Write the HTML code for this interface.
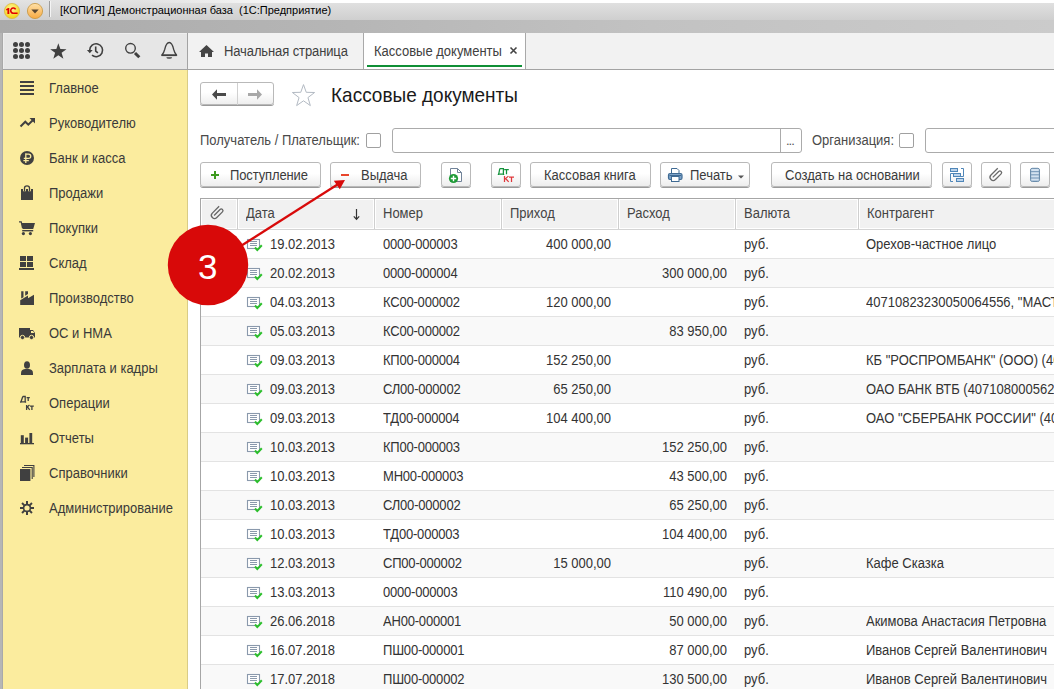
<!DOCTYPE html>
<html><head><meta charset="utf-8">
<style>
*{margin:0;padding:0;box-sizing:border-box}
html,body{width:1054px;height:689px;overflow:hidden;background:#fff;font-family:"Liberation Sans",sans-serif;font-size:13px;color:#333}
.a{position:absolute;white-space:nowrap}
#title{left:0;top:0;width:1054px;height:20px;background:linear-gradient(#e3e3e3,#cfcfcf)}
#ttop{left:0;top:0;width:1054px;height:3px;background:linear-gradient(90deg,rgba(255,255,255,0) 140px,#fff 330px)}
#band{left:0;top:20px;width:1054px;height:13px;background:linear-gradient(90deg,#aaaaaa,#b6b6b6 350px,#c2c2c2 650px,#cbcbcb)}
#lborder{left:0;top:33px;width:3px;height:656px;background:linear-gradient(90deg,#b6b6b6 2px,#a9a9a9 2px)}
#ltop{left:3px;top:33px;width:184px;height:36px;background:#e6e6e6;border-top:1px solid #eeeeee;border-left:1px solid #eeeeee}
#tabs{left:188px;top:33px;width:866px;height:36px;background:#f2f2f2}
#hline{left:3px;top:69px;width:1051px;height:1px;background:#a3a3a3}
#vline{left:187px;top:33px;width:1px;height:37px;background:#a3a3a3}
#yellow{left:3px;top:70px;width:184px;height:619px;background:#fbec9e}
#yline{left:187px;top:70px;width:1px;height:619px;background:#d9cc86}
.side{left:49px;color:#3a3a3a;font-size:13px;line-height:16px}
.t,.side,.c,.btn span,.hd span{transform:scaleY(1.1);transform-origin:0 12px}
.btn{position:absolute;top:162px;height:25px;border:1px solid #b9b9b9;border-radius:3px;background:linear-gradient(#ffffff 45%,#ededed);box-shadow:0 1px 0 #9a9a9a;color:#3b3b3b;line-height:16px}
.btn span{position:absolute;top:5px}
.hd{position:absolute;top:199px;height:30px;background:#f1f1f1;border:1px solid #fff;color:#444;line-height:16px}
.hd span{position:absolute;left:7px;top:6px}
.hsep{position:absolute;top:199px;width:1px;height:30px;background:#cfcfcf}
.row{position:absolute;left:201px;width:853px;height:29px;border-bottom:1px solid #e3e3e3}
.c{position:absolute;white-space:nowrap;top:7px;line-height:16px;color:#333}
.r{text-align:right}
.cb{position:absolute;top:133px;width:15px;height:15px;border:1px solid #a0a0a0;border-radius:2px;background:#fff}
.inp{position:absolute;top:128px;height:25px;border:1px solid #ababab;border-radius:3px;background:#fff}
</style></head><body>
<div id="title" class="a"></div><div id="ttop" class="a"></div>
<div class="a" style="left:60px;top:3px;font-size:11px;line-height:14px;color:#000">[КОПИЯ] Демонстрационная база&nbsp; (1С:Предприятие)</div>
<div id="band" class="a"></div>
<div id="lborder" class="a"></div>
<div id="ltop" class="a"></div>
<div id="tabs" class="a"></div>
<div class="a" style="left:363px;top:33px;width:163px;height:36px;background:#fff;border-left:1px solid #a9a9a9;border-right:1px solid #a9a9a9"></div>
<div class="a" style="left:367px;top:65px;width:155px;height:2px;background:#0f8f36"></div>
<div class="a t" style="left:224px;top:44px;line-height:16px;color:#404040;letter-spacing:-0.11px">Начальная страница</div>
<div class="a t" style="left:374px;top:44px;line-height:16px;color:#404040">Кассовые документы</div>
<div id="hline" class="a"></div>
<div id="vline" class="a"></div>
<div id="yellow" class="a"></div>
<div id="yline" class="a"></div>
<div class="a side" style="top:81px">Главное</div><div class="a side" style="top:116px">Руководителю</div><div class="a side" style="top:151px">Банк и касса</div><div class="a side" style="top:186px">Продажи</div><div class="a side" style="top:221px">Покупки</div><div class="a side" style="top:256px">Склад</div><div class="a side" style="top:291px">Производство</div><div class="a side" style="top:326px">ОС и НМА</div><div class="a side" style="top:361px">Зарплата и кадры</div><div class="a side" style="top:396px">Операции</div><div class="a side" style="top:431px">Отчеты</div><div class="a side" style="top:466px">Справочники</div><div class="a side" style="top:501px">Администрирование</div>
<!-- nav -->
<div class="a" style="left:200px;top:82px;width:74px;height:23px;border:1px solid #b9b9b9;border-radius:3px;background:linear-gradient(#fff 45%,#eee);box-shadow:0 1px 0 #9a9a9a"></div>
<div class="a" style="left:237px;top:83px;width:1px;height:22px;background:#d0d0d0"></div>
<div class="a" style="left:331px;top:85px;font-size:19px;line-height:22px;color:#1a1a1a;transform:scaleY(1.077);transform-origin:0 17px">Кассовые документы</div>
<!-- filters -->
<div class="a t" style="left:200px;top:133px;line-height:16px;color:#4a4a4a">Получатель / Плательщик:</div>
<div class="cb" style="left:366px"></div>
<div class="inp" style="left:392px;width:410px"></div>
<div class="a" style="left:780px;top:129px;width:1px;height:23px;background:#ababab"></div>
<div class="a" style="left:786px;top:133px;line-height:16px;color:#555;letter-spacing:-1px">...</div>
<div class="a t" style="left:812px;top:133px;line-height:16px;color:#4a4a4a">Организация:</div>
<div class="cb" style="left:899px"></div>
<div class="inp" style="left:925px;width:140px"></div>
<!-- toolbar -->
<div class="btn" style="left:200px;width:121px"><span style="left:29px;letter-spacing:-0.13px">Поступление</span></div>
<div class="btn" style="left:330px;width:91px"><span style="left:30px">Выдача</span></div>
<div class="btn" style="left:441px;width:30px"></div>
<div class="btn" style="left:491px;width:30px"></div>
<div class="btn" style="left:530px;width:121px"><span style="left:13px">Кассовая книга</span></div>
<div class="btn" style="left:660px;width:90px"><span style="left:29px">Печать</span></div>
<div class="btn" style="left:771px;width:161px"><span style="left:13px">Создать на основании</span></div>
<div class="btn" style="left:942px;width:30px"></div>
<div class="btn" style="left:981px;width:30px"></div>
<div class="btn" style="left:1020px;width:30px"></div>
<!-- table -->
<div class="a" style="left:200px;top:198px;width:854px;height:491px;border-top:1px solid #a6a6a6;border-left:1px solid #a6a6a6"></div>
<div class="hd" style="left:201px;width:36px"></div>
<div class="hd" style="left:238px;width:136px"><span>Дата</span></div>
<div class="hd" style="left:375px;width:126px"><span>Номер</span></div>
<div class="hd" style="left:502px;width:116px"><span>Приход</span></div>
<div class="hd" style="left:619px;width:116px"><span>Расход</span></div>
<div class="hd" style="left:736px;width:122px"><span>Валюта</span></div>
<div class="hd" style="left:859px;width:200px"><span>Контрагент</span></div>
<div class="hsep" style="left:237px"></div>
<div class="hsep" style="left:374px"></div>
<div class="hsep" style="left:501px"></div>
<div class="hsep" style="left:618px"></div>
<div class="hsep" style="left:735px"></div>
<div class="hsep" style="left:858px"></div>
<div class="a" style="left:201px;top:229px;width:853px;height:1px;background:#d4d4d4"></div>
<div class="row" style="top:230px;background:#fff"><span class="c" style="left:69px">19.02.2013</span><span class="c" style="left:182px;letter-spacing:-0.2px">0000-000003</span><span class="c r" style="right:443px">400 000,00</span><span class="c r" style="right:327px"></span><span class="c" style="left:543px">руб.</span><span class="c" style="left:665px">Орехов-частное лицо</span></div>
<div class="row" style="top:259px;background:#f9f9f9"><span class="c" style="left:69px">20.02.2013</span><span class="c" style="left:182px;letter-spacing:-0.2px">0000-000004</span><span class="c r" style="right:443px"></span><span class="c r" style="right:327px">300 000,00</span><span class="c" style="left:543px">руб.</span><span class="c" style="left:665px"></span></div>
<div class="row" style="top:288px;background:#fff"><span class="c" style="left:69px">04.03.2013</span><span class="c" style="left:182px;letter-spacing:-0.2px">КС00-000002</span><span class="c r" style="right:443px">120 000,00</span><span class="c r" style="right:327px"></span><span class="c" style="left:543px">руб.</span><span class="c" style="left:665px">40710823230050064556, &quot;МАСТЕР&quot;</span></div>
<div class="row" style="top:317px;background:#f9f9f9"><span class="c" style="left:69px">05.03.2013</span><span class="c" style="left:182px;letter-spacing:-0.2px">КС00-000002</span><span class="c r" style="right:443px"></span><span class="c r" style="right:327px">83 950,00</span><span class="c" style="left:543px">руб.</span><span class="c" style="left:665px"></span></div>
<div class="row" style="top:346px;background:#fff"><span class="c" style="left:69px">09.03.2013</span><span class="c" style="left:182px;letter-spacing:-0.2px">КП00-000004</span><span class="c r" style="right:443px">152 250,00</span><span class="c r" style="right:327px"></span><span class="c" style="left:543px">руб.</span><span class="c" style="left:665px">КБ &quot;РОСПРОМБАНК&quot; (ООО) (40710800</span></div>
<div class="row" style="top:375px;background:#f9f9f9"><span class="c" style="left:69px">09.03.2013</span><span class="c" style="left:182px;letter-spacing:-0.2px">СЛ00-000002</span><span class="c r" style="right:443px">65 250,00</span><span class="c r" style="right:327px"></span><span class="c" style="left:543px">руб.</span><span class="c" style="left:665px">ОАО БАНК ВТБ (40710800056200</span></div>
<div class="row" style="top:404px;background:#fff"><span class="c" style="left:69px">09.03.2013</span><span class="c" style="left:182px;letter-spacing:-0.2px">ТД00-000004</span><span class="c r" style="right:443px">104 400,00</span><span class="c r" style="right:327px"></span><span class="c" style="left:543px">руб.</span><span class="c" style="left:665px">ОАО &quot;СБЕРБАНК РОССИИ&quot; (4071080</span></div>
<div class="row" style="top:433px;background:#f9f9f9"><span class="c" style="left:69px">10.03.2013</span><span class="c" style="left:182px;letter-spacing:-0.2px">КП00-000003</span><span class="c r" style="right:443px"></span><span class="c r" style="right:327px">152 250,00</span><span class="c" style="left:543px">руб.</span><span class="c" style="left:665px"></span></div>
<div class="row" style="top:462px;background:#fff"><span class="c" style="left:69px">10.03.2013</span><span class="c" style="left:182px;letter-spacing:-0.2px">МН00-000003</span><span class="c r" style="right:443px"></span><span class="c r" style="right:327px">43 500,00</span><span class="c" style="left:543px">руб.</span><span class="c" style="left:665px"></span></div>
<div class="row" style="top:491px;background:#f9f9f9"><span class="c" style="left:69px">10.03.2013</span><span class="c" style="left:182px;letter-spacing:-0.2px">СЛ00-000002</span><span class="c r" style="right:443px"></span><span class="c r" style="right:327px">65 250,00</span><span class="c" style="left:543px">руб.</span><span class="c" style="left:665px"></span></div>
<div class="row" style="top:520px;background:#fff"><span class="c" style="left:69px">10.03.2013</span><span class="c" style="left:182px;letter-spacing:-0.2px">ТД00-000003</span><span class="c r" style="right:443px"></span><span class="c r" style="right:327px">104 400,00</span><span class="c" style="left:543px">руб.</span><span class="c" style="left:665px"></span></div>
<div class="row" style="top:549px;background:#f9f9f9"><span class="c" style="left:69px">12.03.2013</span><span class="c" style="left:182px;letter-spacing:-0.2px">СП00-000002</span><span class="c r" style="right:443px">15 000,00</span><span class="c r" style="right:327px"></span><span class="c" style="left:543px">руб.</span><span class="c" style="left:665px">Кафе Сказка</span></div>
<div class="row" style="top:578px;background:#fff"><span class="c" style="left:69px">13.03.2013</span><span class="c" style="left:182px;letter-spacing:-0.2px">0000-000003</span><span class="c r" style="right:443px"></span><span class="c r" style="right:327px">110 490,00</span><span class="c" style="left:543px">руб.</span><span class="c" style="left:665px"></span></div>
<div class="row" style="top:607px;background:#f9f9f9"><span class="c" style="left:69px">26.06.2018</span><span class="c" style="left:182px;letter-spacing:-0.2px">АН00-000001</span><span class="c r" style="right:443px"></span><span class="c r" style="right:327px">50 000,00</span><span class="c" style="left:543px">руб.</span><span class="c" style="left:665px">Акимова Анастасия Петровна</span></div>
<div class="row" style="top:636px;background:#fff"><span class="c" style="left:69px">16.07.2018</span><span class="c" style="left:182px;letter-spacing:-0.2px">ПШ00-000001</span><span class="c r" style="right:443px"></span><span class="c r" style="right:327px">87 000,00</span><span class="c" style="left:543px">руб.</span><span class="c" style="left:665px">Иванов Сергей Валентинович</span></div>
<div class="row" style="top:665px;background:#f9f9f9"><span class="c" style="left:69px">17.07.2018</span><span class="c" style="left:182px;letter-spacing:-0.2px">ПШ00-000002</span><span class="c r" style="right:443px"></span><span class="c r" style="right:327px">130 500,00</span><span class="c" style="left:543px">руб.</span><span class="c" style="left:665px">Иванов Сергей Валентинович</span></div>
<svg class="a" style="left:0;top:0" width="1054" height="689" viewBox="0 0 1054 689">
<defs>

<radialGradient id="g1c" cx="0.45" cy="0.35" r="0.7"><stop offset="0" stop-color="#fff7a0"/><stop offset="1" stop-color="#f2cf00"/></radialGradient>
<linearGradient id="gdd" x1="0" y1="0" x2="0" y2="1"><stop offset="0" stop-color="#ffe1a8"/><stop offset="1" stop-color="#f7a941"/></linearGradient>
</defs>
<!-- title icons -->
<circle cx="12" cy="11" r="7.6" fill="url(#g1c)" stroke="#d9b84a" stroke-width="0.8"/>
<path d="M6 9.3L8.1 7.9H9.3V14.1H7.4V9.9L6.4 10.6Z" fill="#e20000"/><path d="M15.6 9.4A2.6 2.6 0 1 0 12.9 13.2H17.6" fill="none" stroke="#e20000" stroke-width="1.6"/>
<circle cx="35" cy="11" r="7.6" fill="url(#gdd)" stroke="#c7963d" stroke-width="0.8"/>
<path d="M31.3 9.5h7.4l-3.7 4z" fill="#5a4630"/>
<path d="M49.5 1v16" stroke="#9c9c9c" stroke-width="1"/>
<path d="M50.5 1v16" stroke="#f4f4f4" stroke-width="1"/>
<!-- top panel icons -->
<g fill="#404040">
<circle cx="15.5" cy="44.5" r="2.5"/><circle cx="21.5" cy="44.5" r="2.5"/><circle cx="27.5" cy="44.5" r="2.5"/>
<circle cx="15.5" cy="50.5" r="2.5"/><circle cx="21.5" cy="50.5" r="2.5"/><circle cx="27.5" cy="50.5" r="2.5"/>
<circle cx="15.5" cy="56.5" r="2.5"/><circle cx="21.5" cy="56.5" r="2.5"/><circle cx="27.5" cy="56.5" r="2.5"/>
<path d="M58.35 43.2 L60.37 49.02 L66.5 49.14 L61.6 52.86 L63.39 58.76 L58.35 55.24 L53.31 58.76 L55.1 52.86 L50.2 49.14 L56.33 49.02Z"/>
</g>
<g fill="none" stroke="#404040" stroke-width="1.6">
<path d="M89.7 50.3A6.45 6.45 0 1 1 92 55.2"/>
<path d="M95.7 46.4V51L97.9 52.8"/>
<circle cx="130.5" cy="48.3" r="4.8" stroke-width="1.4"/>
</g>
<path d="M86.9 49.9H92.7L89.8 53.3z" fill="#404040"/>
<path d="M135 53L139.3 57.3" stroke="#404040" stroke-width="3"/>
<path d="M169.2 42.5C166.6 42.5 165.6 45.5 164.7 49.5C164 52.3 162.9 54 161.8 55.2H176.6C175.5 54 174.4 52.3 173.7 49.5C172.8 45.5 171.8 42.5 169.2 42.5Z" fill="none" stroke="#404040" stroke-width="1.3" stroke-linejoin="round"/><path d="M161.6 55.3H176.8" stroke="#404040" stroke-width="1.6"/>
<path d="M166.3 57.2H172.1A2.9 1.5 0 0 1 166.3 57.2z" fill="#404040"/>
<path d="M510.5 47.5l6 6M516.5 47.5l-6 6" stroke="#454545" stroke-width="1.6"/>
<!-- home -->
<path d="M206.5 45l-7.5 7h2v5h4v-3.5h3v3.5h4v-5h2z" fill="#454545"/>
<!-- nav arrows -->
<path d="M212 94.5l5-5.2v3.7h9v3h-9v3.7z" fill="#4a4a4a"/>
<path d="M262 94.5l-5-5.2v3.7h-9v3h9v3.7z" fill="#a8a8a8"/>
<!-- star outline -->
<path d="M303.5 84.6 L306.25 92.3 L314.6 92.5 L307.95 97.6 L310.35 105.6 L303.5 100.8 L296.65 105.6 L299.05 97.6 L292.4 92.5 L300.75 92.3Z" fill="#fff" stroke="#b3bac3" stroke-width="1"/>
<!-- sidebar icons -->
<g fill="#404040">
<rect x="20" y="81" width="14" height="2"/><rect x="20" y="85" width="14" height="2"/><rect x="20" y="89" width="14" height="2"/><rect x="20" y="93" width="14" height="2"/>
<path d="M29.5 118h5.5v5.5z"/>
<circle cx="27" cy="158" r="7"/>
<rect x="21" y="189" width="12" height="11"/>
<path d="M21.6 223H35L33.2 229H22.6z"/>
<rect x="22.2" y="230" width="11" height="1.4"/>
<circle cx="23.4" cy="233.6" r="1.6"/><circle cx="30.4" cy="233.6" r="1.6"/>
<rect x="20" y="256" width="6" height="5"/><rect x="27" y="256" width="6" height="5"/><rect x="20" y="262" width="6" height="5"/><rect x="27" y="262" width="6" height="5"/><rect x="19" y="268" width="15" height="2"/>
<path d="M20.2 305V300.2L28 295.6V298.2L34 294.8V305Z"/><path d="M21.2 291.2H23.5V297.3L21.2 298.6Z"/><path d="M25.2 291.2H28V294.1L25.2 295.7Z"/>
<path d="M19 328h11v2h3l2 3v4.5h-16z"/>
<ellipse cx="27" cy="365" rx="3" ry="3.8"/>
<path d="M21 375v-1.8q0-3.6 4-4.2h4q4 .6 4 4.2v1.8z"/>
<rect x="20" y="443" width="14" height="1.3"/><rect x="20.8" y="435.2" width="3" height="8"/><rect x="25.1" y="437.6" width="3" height="5.6"/><rect x="29.4" y="433" width="2.8" height="10.2"/>
<rect x="20" y="469" width="10.4" height="12"/>
</g>
<path d="M24.5 188.6V191.3M29.5 188.6V191.3" stroke="#fbec9e" stroke-width="3"/><path d="M24.5 191.3V188A2.5 2.2 0 0 1 29.5 188V191.3" fill="none" stroke="#404040" stroke-width="1.3"/>
<path d="M19 221.8H21.2L22.6 228" fill="none" stroke="#404040" stroke-width="1.3"/>
<path d="M20.5 126.5l4.8-4.8 3 3 4.5-4.5" fill="none" stroke="#404040" stroke-width="2"/>
<path d="M25.8 153.3V163M25.8 154.1H28.6A2.15 2.15 0 0 1 28.6 158.4H23.8M23.4 160.6H28.8" fill="none" stroke="#fbec9e" stroke-width="1.3"/>
<path d="M31 331h2l1.4 2h-3.4z" fill="#fbec9e"/>
<circle cx="22.5" cy="337.5" r="2.2" fill="#404040" stroke="#fbec9e" stroke-width="1"/><circle cx="31.5" cy="337.5" r="2.2" fill="#404040" stroke="#fbec9e" stroke-width="1"/>
<path d="M22 467.5H32.2V479M24 465.5H33.9V477" fill="none" stroke="#404040" stroke-width="1.1"/>
<path d="M22.8 396.5H25.2V401.8M22.8 396.5L21 401.8M20.3 401.8H25.9M20.7 401.6V402.8M25.5 401.6V402.8M26.6 397.7H29.8M28.2 397.7V400.9M26.6 404.9V409.9M26.6 407.4L29.5 404.9M27.4 406.9L29.7 409.9M30 406.2H33.8M31.9 406.2V409.9" fill="none" stroke="#404040" stroke-width="1.3"/>
<g transform="translate(27 508)" fill="#404040"><circle r="3.4" fill="none" stroke="#404040" stroke-width="1.6"/><rect x="-1" y="-7" width="2" height="3.6" transform="rotate(0)"/><rect x="-1" y="-7" width="2" height="3.6" transform="rotate(45)"/><rect x="-1" y="-7" width="2" height="3.6" transform="rotate(90)"/><rect x="-1" y="-7" width="2" height="3.6" transform="rotate(135)"/><rect x="-1" y="-7" width="2" height="3.6" transform="rotate(180)"/><rect x="-1" y="-7" width="2" height="3.6" transform="rotate(225)"/><rect x="-1" y="-7" width="2" height="3.6" transform="rotate(270)"/><rect x="-1" y="-7" width="2" height="3.6" transform="rotate(315)"/></g>
<!-- toolbar icons -->
<path d="M211 175h8M215 171v8" stroke="#3d9a1f" stroke-width="2"/>
<path d="M341 175h8" stroke="#e8452c" stroke-width="2"/>
<path d="M450.5 168.5h7l4 4v9h-11z" fill="#fff" stroke="#718399" stroke-width="1"/>
<path d="M457.5 168.5v4h4" fill="none" stroke="#718399" stroke-width="1"/>
<circle cx="453.5" cy="178.5" r="4.6" fill="#1d9a35"/>
<path d="M450.8 178.5h5.4M453.5 175.8v5.4" stroke="#fff" stroke-width="1.4"/>
<path d="M499.8 168.6H503.4V174.2M499.8 168.6L498.7 174.2M498 174.2H504M498.4 174V175.1M503.6 174V175.1M504.2 169.5H508.8M506.5 169.5V174.2" fill="none" stroke="#14923c" stroke-width="1.25"/>
<path d="M504.5 176.1V181.9M504.9 179.1L508.4 176.1M505.6 178.5L508.7 181.9M509 177.1H514M511.5 177.1V181.9" fill="none" stroke="#e0383c" stroke-width="1.25"/>
<path d="M671.5 168.5h5.5l2 2v3h-7.5z" fill="#fff" stroke="#3f6a93" stroke-width="1"/>
<rect x="668.5" y="173.5" width="13.5" height="6" rx="1.5" fill="#7da3c8" stroke="#3f6a93" stroke-width="1.2"/>
<path d="M669.5 175.5h11.5" stroke="#3f6a93" stroke-width="1"/>
<rect x="671.5" y="176.5" width="7.5" height="5" fill="#fff" stroke="#3f6a93" stroke-width="1"/>
<path d="M738 175.5h6l-3 3z" fill="#555"/>
<g fill="#bcd3ea" stroke="#4f86b8" stroke-width="1">
<rect x="950.5" y="168.5" width="7" height="3"/>
<rect x="953.5" y="173.5" width="7" height="3"/>
<rect x="956.5" y="178.5" width="7" height="3"/>
</g>
<path d="M953 173.5H950.5V181.5H953M961 168.5H963.5V176.5H961" fill="none" stroke="#4f86b8" stroke-width="1"/>
<path transform="translate(996.15 174.55) rotate(45)" d="M-3.3 -5.6V4A3.15 3.15 0 0 0 3 4V-4A1.7 1.7 0 0 0 -0.4 -4V4.4" fill="none" stroke="#6a6a6a" stroke-width="1.3"/>
<rect x="1030.5" y="168.3" width="9" height="13.2" rx="1.8" fill="#7f9fbe" stroke="#6a8cab" stroke-width="1"/>
<g fill="#d3e2f0"><rect x="1031.2" y="169" width="7.6" height="2"/><rect x="1031.2" y="172.2" width="7.6" height="2"/><rect x="1031.2" y="175.4" width="7.6" height="2"/><rect x="1031.2" y="178.6" width="7.6" height="2"/></g>
<!-- header icons -->
<path transform="translate(217.5 212.6) rotate(45)" d="M-3.3 -5.6V4A3.15 3.15 0 0 0 3 4V-4A1.7 1.7 0 0 0 -0.4 -4V4.4" fill="none" stroke="#666" stroke-width="1.3"/>
<path d="M356.5 209v10M353.8 216.3l2.7 3 2.7-3" fill="none" stroke="#333" stroke-width="1.2"/>
<g transform="translate(0 0)">
<rect x="247.5" y="239.5" width="12" height="9" fill="#fff" stroke="#8a99ac" stroke-width="1.1"/>
<path d="M250 241.5h7M250 243.5h7M250 245.5h7" stroke="#8a99ac" stroke-width="1"/>
<path d="M255 247.5l2.3 2.6 4.5-4.8" fill="none" stroke="#2cbf2c" stroke-width="2"/>
</g>
<g transform="translate(0 29)">
<rect x="247.5" y="239.5" width="12" height="9" fill="#fff" stroke="#8a99ac" stroke-width="1.1"/>
<path d="M250 241.5h7M250 243.5h7M250 245.5h7" stroke="#8a99ac" stroke-width="1"/>
<path d="M255 247.5l2.3 2.6 4.5-4.8" fill="none" stroke="#2cbf2c" stroke-width="2"/>
</g>
<g transform="translate(0 58)">
<rect x="247.5" y="239.5" width="12" height="9" fill="#fff" stroke="#8a99ac" stroke-width="1.1"/>
<path d="M250 241.5h7M250 243.5h7M250 245.5h7" stroke="#8a99ac" stroke-width="1"/>
<path d="M255 247.5l2.3 2.6 4.5-4.8" fill="none" stroke="#2cbf2c" stroke-width="2"/>
</g>
<g transform="translate(0 87)">
<rect x="247.5" y="239.5" width="12" height="9" fill="#fff" stroke="#8a99ac" stroke-width="1.1"/>
<path d="M250 241.5h7M250 243.5h7M250 245.5h7" stroke="#8a99ac" stroke-width="1"/>
<path d="M255 247.5l2.3 2.6 4.5-4.8" fill="none" stroke="#2cbf2c" stroke-width="2"/>
</g>
<g transform="translate(0 116)">
<rect x="247.5" y="239.5" width="12" height="9" fill="#fff" stroke="#8a99ac" stroke-width="1.1"/>
<path d="M250 241.5h7M250 243.5h7M250 245.5h7" stroke="#8a99ac" stroke-width="1"/>
<path d="M255 247.5l2.3 2.6 4.5-4.8" fill="none" stroke="#2cbf2c" stroke-width="2"/>
</g>
<g transform="translate(0 145)">
<rect x="247.5" y="239.5" width="12" height="9" fill="#fff" stroke="#8a99ac" stroke-width="1.1"/>
<path d="M250 241.5h7M250 243.5h7M250 245.5h7" stroke="#8a99ac" stroke-width="1"/>
<path d="M255 247.5l2.3 2.6 4.5-4.8" fill="none" stroke="#2cbf2c" stroke-width="2"/>
</g>
<g transform="translate(0 174)">
<rect x="247.5" y="239.5" width="12" height="9" fill="#fff" stroke="#8a99ac" stroke-width="1.1"/>
<path d="M250 241.5h7M250 243.5h7M250 245.5h7" stroke="#8a99ac" stroke-width="1"/>
<path d="M255 247.5l2.3 2.6 4.5-4.8" fill="none" stroke="#2cbf2c" stroke-width="2"/>
</g>
<g transform="translate(0 203)">
<rect x="247.5" y="239.5" width="12" height="9" fill="#fff" stroke="#8a99ac" stroke-width="1.1"/>
<path d="M250 241.5h7M250 243.5h7M250 245.5h7" stroke="#8a99ac" stroke-width="1"/>
<path d="M255 247.5l2.3 2.6 4.5-4.8" fill="none" stroke="#2cbf2c" stroke-width="2"/>
</g>
<g transform="translate(0 232)">
<rect x="247.5" y="239.5" width="12" height="9" fill="#fff" stroke="#8a99ac" stroke-width="1.1"/>
<path d="M250 241.5h7M250 243.5h7M250 245.5h7" stroke="#8a99ac" stroke-width="1"/>
<path d="M255 247.5l2.3 2.6 4.5-4.8" fill="none" stroke="#2cbf2c" stroke-width="2"/>
</g>
<g transform="translate(0 261)">
<rect x="247.5" y="239.5" width="12" height="9" fill="#fff" stroke="#8a99ac" stroke-width="1.1"/>
<path d="M250 241.5h7M250 243.5h7M250 245.5h7" stroke="#8a99ac" stroke-width="1"/>
<path d="M255 247.5l2.3 2.6 4.5-4.8" fill="none" stroke="#2cbf2c" stroke-width="2"/>
</g>
<g transform="translate(0 290)">
<rect x="247.5" y="239.5" width="12" height="9" fill="#fff" stroke="#8a99ac" stroke-width="1.1"/>
<path d="M250 241.5h7M250 243.5h7M250 245.5h7" stroke="#8a99ac" stroke-width="1"/>
<path d="M255 247.5l2.3 2.6 4.5-4.8" fill="none" stroke="#2cbf2c" stroke-width="2"/>
</g>
<g transform="translate(0 319)">
<rect x="247.5" y="239.5" width="12" height="9" fill="#fff" stroke="#8a99ac" stroke-width="1.1"/>
<path d="M250 241.5h7M250 243.5h7M250 245.5h7" stroke="#8a99ac" stroke-width="1"/>
<path d="M255 247.5l2.3 2.6 4.5-4.8" fill="none" stroke="#2cbf2c" stroke-width="2"/>
</g>
<g transform="translate(0 348)">
<rect x="247.5" y="239.5" width="12" height="9" fill="#fff" stroke="#8a99ac" stroke-width="1.1"/>
<path d="M250 241.5h7M250 243.5h7M250 245.5h7" stroke="#8a99ac" stroke-width="1"/>
<path d="M255 247.5l2.3 2.6 4.5-4.8" fill="none" stroke="#2cbf2c" stroke-width="2"/>
</g>
<g transform="translate(0 377)">
<rect x="247.5" y="239.5" width="12" height="9" fill="#fff" stroke="#8a99ac" stroke-width="1.1"/>
<path d="M250 241.5h7M250 243.5h7M250 245.5h7" stroke="#8a99ac" stroke-width="1"/>
<path d="M255 247.5l2.3 2.6 4.5-4.8" fill="none" stroke="#2cbf2c" stroke-width="2"/>
</g>
<g transform="translate(0 406)">
<rect x="247.5" y="239.5" width="12" height="9" fill="#fff" stroke="#8a99ac" stroke-width="1.1"/>
<path d="M250 241.5h7M250 243.5h7M250 245.5h7" stroke="#8a99ac" stroke-width="1"/>
<path d="M255 247.5l2.3 2.6 4.5-4.8" fill="none" stroke="#2cbf2c" stroke-width="2"/>
</g>
<g transform="translate(0 435)">
<rect x="247.5" y="239.5" width="12" height="9" fill="#fff" stroke="#8a99ac" stroke-width="1.1"/>
<path d="M250 241.5h7M250 243.5h7M250 245.5h7" stroke="#8a99ac" stroke-width="1"/>
<path d="M255 247.5l2.3 2.6 4.5-4.8" fill="none" stroke="#2cbf2c" stroke-width="2"/>
</g>
<!-- annotation -->
<path d="M240 246.5L337.5 184.5" stroke="#d80a0a" stroke-width="2.25"/>
<path d="M345 180l-11.2 .8 6 8.4z" fill="#d80a0a"/>
<circle cx="208" cy="265" r="40.2" fill="#d80909"/>
<text x="207.7" y="279.3" text-anchor="middle" font-family="Liberation Sans" font-size="35" fill="#fff">3</text>
</svg>
</body></html>
